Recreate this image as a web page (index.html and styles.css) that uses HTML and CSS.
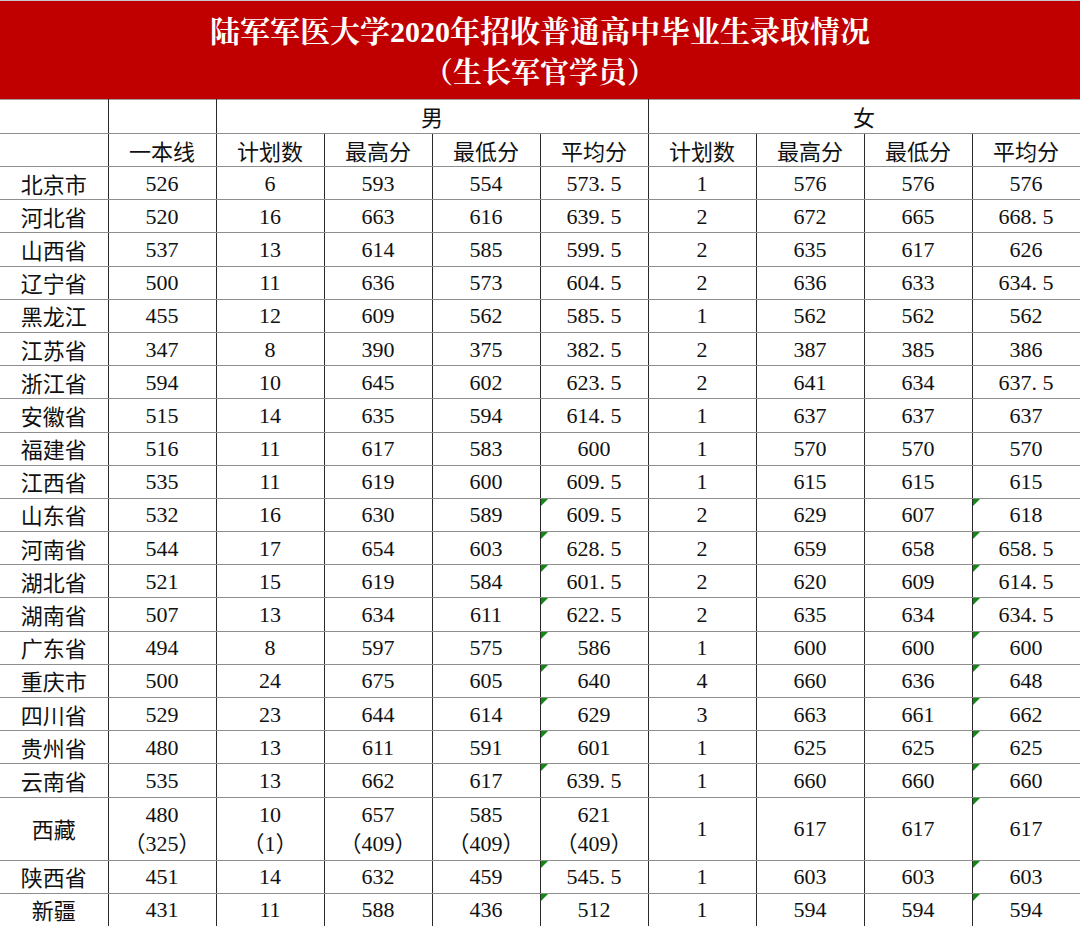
FILE: index.html
```html
<!DOCTYPE html>
<html lang="zh-CN">
<head>
<meta charset="utf-8">
<title>陆军军医大学2020年招收普通高中毕业生录取情况</title>
<link rel="stylesheet" href="styles.css">
</head>
<body>
<div class="page">
  <div class="title">
    <div class="t1">陆军军医大学2020年招收普通高中毕业生录取情况</div>
    <div class="t2">（生长军官学员）</div>
  </div>
  <table class="grid">
    <colgroup>
      <col class="c"><col class="c"><col class="c"><col class="c"><col class="c"><col class="c"><col class="c"><col class="c"><col class="c"><col class="c">
    </colgroup>
    <thead>
      <tr class="h1">
        <th></th><th></th><th colspan="4">男</th><th colspan="4">女</th>
      </tr>
      <tr class="h2">
        <th></th><th>一本线</th><th>计划数</th><th>最高分</th><th>最低分</th><th>平均分</th><th>计划数</th><th>最高分</th><th>最低分</th><th>平均分</th>
      </tr>
    </thead>
    <tbody>
      <tr><th>北京市</th><td>526</td><td>6</td><td>593</td><td>554</td><td>573<span class="p">.</span>5</td><td>1</td><td>576</td><td>576</td><td>576</td></tr>
      <tr><th>河北省</th><td>520</td><td>16</td><td>663</td><td>616</td><td>639<span class="p">.</span>5</td><td>2</td><td>672</td><td>665</td><td>668<span class="p">.</span>5</td></tr>
      <tr><th>山西省</th><td>537</td><td>13</td><td>614</td><td>585</td><td>599<span class="p">.</span>5</td><td>2</td><td>635</td><td>617</td><td>626</td></tr>
      <tr><th>辽宁省</th><td>500</td><td>11</td><td>636</td><td>573</td><td>604<span class="p">.</span>5</td><td>2</td><td>636</td><td>633</td><td>634<span class="p">.</span>5</td></tr>
      <tr><th>黑龙江</th><td>455</td><td>12</td><td>609</td><td>562</td><td>585<span class="p">.</span>5</td><td>1</td><td>562</td><td>562</td><td>562</td></tr>
      <tr><th>江苏省</th><td>347</td><td>8</td><td>390</td><td>375</td><td>382<span class="p">.</span>5</td><td>2</td><td>387</td><td>385</td><td>386</td></tr>
      <tr><th>浙江省</th><td>594</td><td>10</td><td>645</td><td>602</td><td>623<span class="p">.</span>5</td><td>2</td><td>641</td><td>634</td><td>637<span class="p">.</span>5</td></tr>
      <tr><th>安徽省</th><td>515</td><td>14</td><td>635</td><td>594</td><td>614<span class="p">.</span>5</td><td>1</td><td>637</td><td>637</td><td>637</td></tr>
      <tr><th>福建省</th><td>516</td><td>11</td><td>617</td><td>583</td><td>600</td><td>1</td><td>570</td><td>570</td><td>570</td></tr>
      <tr><th>江西省</th><td>535</td><td>11</td><td>619</td><td>600</td><td>609<span class="p">.</span>5</td><td>1</td><td>615</td><td>615</td><td>615</td></tr>
      <tr><th>山东省</th><td>532</td><td>16</td><td>630</td><td>589</td><td class="g">609<span class="p">.</span>5</td><td>2</td><td>629</td><td>607</td><td class="g">618</td></tr>
      <tr><th>河南省</th><td>544</td><td>17</td><td>654</td><td>603</td><td class="g">628<span class="p">.</span>5</td><td>2</td><td>659</td><td>658</td><td class="g">658<span class="p">.</span>5</td></tr>
      <tr><th>湖北省</th><td>521</td><td>15</td><td>619</td><td>584</td><td class="g">601<span class="p">.</span>5</td><td>2</td><td>620</td><td>609</td><td class="g">614<span class="p">.</span>5</td></tr>
      <tr><th>湖南省</th><td>507</td><td>13</td><td>634</td><td>611</td><td class="g">622<span class="p">.</span>5</td><td>2</td><td>635</td><td>634</td><td class="g">634<span class="p">.</span>5</td></tr>
      <tr><th>广东省</th><td>494</td><td>8</td><td>597</td><td>575</td><td class="g">586</td><td>1</td><td>600</td><td>600</td><td class="g">600</td></tr>
      <tr><th>重庆市</th><td>500</td><td>24</td><td>675</td><td>605</td><td class="g">640</td><td>4</td><td>660</td><td>636</td><td class="g">648</td></tr>
      <tr><th>四川省</th><td>529</td><td>23</td><td>644</td><td>614</td><td class="g">629</td><td>3</td><td>663</td><td>661</td><td class="g">662</td></tr>
      <tr><th>贵州省</th><td>480</td><td>13</td><td>611</td><td>591</td><td class="g">601</td><td>1</td><td>625</td><td>625</td><td class="g">625</td></tr>
      <tr><th>云南省</th><td>535</td><td>13</td><td>662</td><td>617</td><td class="g">639<span class="p">.</span>5</td><td>1</td><td>660</td><td>660</td><td class="g">660</td></tr>
      <tr class="tall"><th>西藏</th><td>480<br>（325）</td><td>10<br>（1）</td><td>657<br>（409）</td><td>585<br>（409）</td><td>621<br>（409）</td><td>1</td><td>617</td><td>617</td><td class="g">617</td></tr>
      <tr><th>陕西省</th><td>451</td><td>14</td><td>632</td><td>459</td><td class="g">545<span class="p">.</span>5</td><td>1</td><td>603</td><td>603</td><td class="g">603</td></tr>
      <tr><th>新疆</th><td>431</td><td>11</td><td>588</td><td>436</td><td class="g">512</td><td>1</td><td>594</td><td>594</td><td class="g">594</td></tr>
    </tbody>
  </table>
</div>
</body>
</html>
```

FILE: styles.css
```css
html, body {
  margin: 0;
  padding: 0;
  background: #ffffff;
}

.page {
  width: 1080px;
  overflow: hidden;
}

.title {
  height: 98px;
  background: #c00000;
  border-top: 1px solid #c8c8c8;
  color: #ffffff;
  text-align: center;
  font-family: "Liberation Serif", "Noto Serif CJK SC", "Noto Sans CJK SC", serif;
  font-weight: bold;
  padding-top: 11px;
  box-sizing: border-box;
  height: 99px;
}

.t1 {
  font-size: 30px;
  line-height: 40px;
}

.t2 {
  font-size: 29px;
  line-height: 42px;
}

.grid {
  width: 1080px;
  table-layout: fixed;
  border-collapse: collapse;
  font-family: "Liberation Serif", "Noto Sans CJK SC", serif;
  font-size: 22px;
  color: #111111;
}

.c {
  width: 108px;
}

.grid th,
.grid td {
  padding: 0;
  text-align: center;
  vertical-align: middle;
  border-top: 1px solid #8e8e8e;
  border-bottom: 1px solid #8e8e8e;
  border-left: 1px solid #2a2a2a;
  border-right: 1px solid #2a2a2a;
  line-height: 29px;
  white-space: nowrap;
}

.grid tr > :first-child {
  border-left: none;
}

.grid th {
  font-family: "Noto Sans CJK SC", sans-serif;
  font-weight: normal;
  color: #111111;
}

.grid thead tr:first-child th {
  border-top: 1px solid #a0a0a0;
}

.h1 {
  height: 34px;
}

.h2 {
  height: 33px;
}

.grid tbody tr {
  height: 33.2px;
}

.grid tbody tr.tall {
  height: 63px;
}

.p {
  display: inline-block;
  width: 0.5em;
  text-align: left;
}

.g {
  position: relative;
}

.g::before {
  content: "";
  position: absolute;
  left: 0;
  top: 0;
  width: 0;
  height: 0;
  border-top: 7px solid #108a10;
  border-right: 7px solid transparent;
}
```
